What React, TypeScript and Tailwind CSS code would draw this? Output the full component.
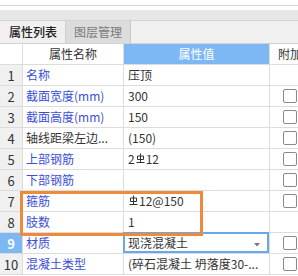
import { ChevronDown } from 'lucide-react'

type Row = {
  n: number
  name: string
  value: string
  rebar?: boolean
  plain?: boolean
  check: boolean
  select?: boolean
}

const rows: Row[] = [
  { n: 1, name: '名称', value: '压顶', check: false },
  { n: 2, name: '截面宽度(mm)', value: '300', check: true },
  { n: 3, name: '截面高度(mm)', value: '150', check: true },
  { n: 4, name: '轴线距梁左边...', value: '(150)', plain: true, check: true },
  { n: 5, name: '上部钢筋', value: '2|12', rebar: true, check: true },
  { n: 6, name: '下部钢筋', value: '', check: true },
  { n: 7, name: '箍筋', value: '|12@150', rebar: true, check: true },
  { n: 8, name: '肢数', value: '1', check: false },
  { n: 9, name: '材质', value: '现浇混凝土', check: true, select: true },
  { n: 10, name: '混凝土类型', value: '(碎石混凝土 坍落度30-...', check: true },
]

function Rebar() {
  return (
    <svg width="9" height="11" viewBox="0 0 9 11" className="inline-block mx-[1px] -mt-[2px]" fill="none" stroke="currentColor" strokeWidth="1">
      <path d="M4.5 0.5V9.5 M1.5 3h6v3.5h-6z M0.5 9.5h8" />
    </svg>
  )
}

function Value({ v, rebar }: { v: string; rebar?: boolean }) {
  if (!rebar) return <>{v}</>
  const [a, b] = v.split('|')
  return (
    <>
      {a}
      <Rebar />
      {b}
    </>
  )
}

const line = 'border-r border-b border-[#dcdcdc]'

export default function App() {
  return (
    <div className="relative w-[298px] h-[276px] overflow-hidden bg-white font-['Noto_Sans_CJK_SC',sans-serif] text-[12px] leading-none text-[#333]">
      <div className="h-[5px]" />
      <div className="h-[1px] bg-[#d6d6d6]" />
      <div className="h-[4px]" />
      <div className="h-[11px] bg-[#e6e6e6] border-b border-[#d2d2d2]" />
      <div className="flex h-[23px] bg-[#f0f0f0] border-b border-[#d2d2d2]">
        <div className="w-[66px] flex items-center pl-[9px] text-[12px] font-medium text-[#222] border-r border-[#cfcfcf]">属性列表</div>
        <div className="w-[65px] flex items-center pl-[8px] bg-[#dcdcdc] text-[#7a7a7a] border-r border-[#c6c6c6]">图层管理</div>
      </div>
      <div className="grid grid-cols-[23px_101px_146px_1fr]">
        <div className={`h-[21px] ${line}`} />
        <div className={`h-[21px] flex items-center justify-center ${line}`}>属性名称</div>
        <div className={`h-[21px] flex items-center justify-center bg-[#7db8f4] text-white ${line}`}>属性值</div>
        <div className={`h-[21px] flex items-center pl-[8px] whitespace-nowrap ${line}`}>附加</div>
        {rows.map((r) => (
          <div key={r.n} className="contents">
            <div
              className={`h-[21px] flex items-center justify-center text-[13px] ${line} ${
                r.select ? 'bg-[#7db8f4] text-white font-semibold' : 'bg-[#f0f0f0] text-[#333]'
              }`}
            >
              {r.n}
            </div>
            <div className={`h-[21px] flex items-center pl-[3px] whitespace-nowrap ${line} ${r.plain ? 'text-[#333]' : 'text-[#3b4ed8]'}`}>
              {r.name}
            </div>
            <div className={`relative h-[21px] flex items-center pl-[4px] whitespace-nowrap ${line}`}>
              <Value v={r.value} rebar={r.rebar} />
              {r.select && (
                <>
                  <div className="absolute -left-[1px] -top-[1px] right-0 bottom-0 border-2 border-[#68a8ea]" />
                  <svg width="6" height="4" viewBox="0 0 6 4" className="absolute left-[130px] top-[10px]">
                    <path d="M0 0h6L3 3.5z" fill="#7a7a7a" />
                  </svg>
                </>
              )}
            </div>
            <div className={`h-[21px] flex items-center pl-[13px] ${line}`}>
              {r.check && <div className="w-[14px] h-[14px] shrink-0 rounded-[2px] border border-[#8a8a8a] bg-white" />}
            </div>
          </div>
        ))}
      </div>
      <div className="absolute left-[20px] top-[191px] w-[183px] h-[45px] border-[3px] border-[#ef8a3b]" />
    </div>
  )
}
